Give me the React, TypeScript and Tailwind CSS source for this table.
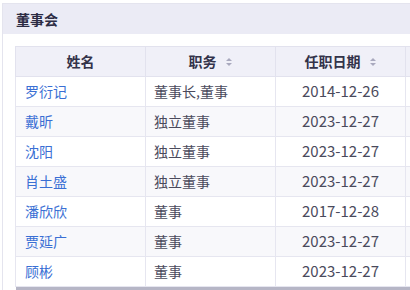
const rows = [
  { name: "罗衍记", title: "董事长,董事", date: "2014-12-26" },
  { name: "戴昕", title: "独立董事", date: "2023-12-27" },
  { name: "沈阳", title: "独立董事", date: "2023-12-27" },
  { name: "肖土盛", title: "独立董事", date: "2023-12-27" },
  { name: "潘欣欣", title: "董事", date: "2017-12-28" },
  { name: "贾延广", title: "董事", date: "2023-12-27" },
  { name: "顾彬", title: "董事", date: "2023-12-27" },
];

function SortIcon() {
  return (
    <svg width="8" height="12" viewBox="0 0 8 12" className="ml-[8px] inline-block">
      <path d="M4 2 L7 5 L1 5 Z" fill="#a9a9be" />
      <path d="M4 10 L7 7 L1 7 Z" fill="#a9a9be" />
    </svg>
  );
}

export default function App() {
  return (
    <div
      className="w-[410px] h-[290px] overflow-hidden bg-white"
      style={{ fontFamily: '"Noto Sans CJK SC", "Noto Sans", sans-serif' }}
    >
      <div className="mt-[3px] ml-[2px] border-l border-t border-[#e4e4ee] h-[287px] overflow-hidden">
        <div className="h-[30px] bg-[#ebebf5] flex items-center pl-[13px] text-[14px] font-bold text-[#2c2c44]">
          董事会
        </div>
        <div className="pt-[12px] pl-[12px]">
          <table className="border-collapse text-[14px] table-fixed w-[520px]">
            <thead>
              <tr className="bg-[#f0f0f8] text-[#33334a]">
                <th className="w-[130px] h-[30px] border border-[#e2e2ee] font-semibold">姓名</th>
                <th className="w-[130px] h-[30px] border border-[#e2e2ee] font-semibold">
                  <span className="inline-flex items-center">职务<SortIcon /></span>
                </th>
                <th className="w-[130px] h-[30px] border border-[#e2e2ee] font-semibold">
                  <span className="inline-flex items-center">任职日期<SortIcon /></span>
                </th>
                <th className="w-[130px] h-[30px] border border-[#e2e2ee]"></th>
              </tr>
            </thead>
            <tbody>
              {rows.map((r, i) => (
                <tr key={i} className={i % 2 === 1 ? "bg-[#f8f8fb]" : "bg-white"}>
                  <td className="h-[30px] border border-[#e6e6f0] pl-[9px] text-[#3a6fd4]">{r.name}</td>
                  <td className="h-[30px] border border-[#e6e6f0] pl-[8px] text-[#4a4a5c]">{r.title}</td>
                  <td className="h-[30px] border border-[#e6e6f0] text-center text-[15px] text-[#4a4a5c]">{r.date}</td>
                  <td className="h-[30px] border border-[#e6e6f0]"></td>
                </tr>
              ))}
            </tbody>
          </table>
          <div className="ml-[1px] h-[4px] bg-[#b6b6c6]" />
        </div>
      </div>
    </div>
  );
}
